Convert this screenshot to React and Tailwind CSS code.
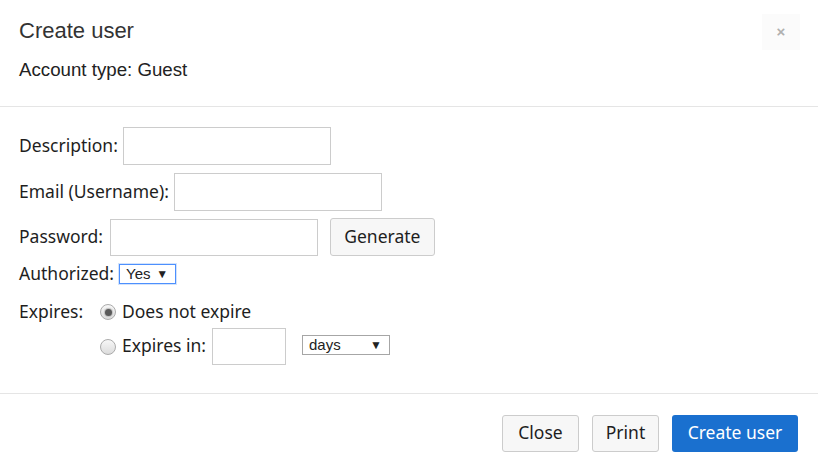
import React from 'react';

const sans = { fontFamily: '"Noto Sans", "Open Sans", sans-serif' };

function Radio({ checked }) {
  return (
    <span className="w-[16px] h-[16px] rounded-full border border-[#ababab] bg-gradient-to-b from-[#f7f7f7] to-[#dcdcdc] flex items-center justify-center shrink-0">
      {checked && <span className="w-[7px] h-[7px] rounded-full bg-[#5a5a5a] shadow-[0_0_1px_1px_#bdbdbd]" />}
    </span>
  );
}

function FakeSelect({ value, width, focused }) {
  return (
    <div
      className={`h-[20px] flex items-center justify-between pl-[6px] pr-[7px] bg-white font-['Liberation_Sans',Arial,sans-serif] text-[15px] text-[#222] ${
        focused ? 'border border-[#4d90fe] shadow-[0_0_0_1px_#d3e3fb]' : 'border border-[#a6a6a6]'
      }`}
      style={{ width }}
    >
      <span>{value}</span>
      <span className="text-[12px] leading-none">▼</span>
    </div>
  );
}

export default function App() {
  return (
    <div className="w-[818px] h-[471px] bg-white text-[#1e1e1e] overflow-hidden" style={sans}>
      {/* header */}
      <div className="h-[107px] border-b border-[#e5e5e5] flex justify-between">
        <div className="pl-[19px] font-['Liberation_Sans',Arial,sans-serif]">
          <div className="mt-[19px] h-[24px] leading-[24px] text-[22px] text-[#333]">Create user</div>
          <div className="mt-[15px] h-[24px] leading-[24px] text-[18.7px] text-[#222]">Account type: Guest</div>
        </div>
        <button className="mt-[14px] mr-[18px] w-[38px] h-[36px] bg-[#fbfbfb] flex items-center justify-center text-[#b0b0b0] text-[15px] font-bold font-['Liberation_Sans',Arial,sans-serif]">
          ×
        </button>
      </div>

      {/* body */}
      <div className="h-[287px] border-b border-[#e5e5e5] pl-[19px] pt-[20px] text-[17.5px]">
        <div className="flex items-center h-[38px]">
          <span className="pb-[2px]">Description:</span>
          <input className="ml-[5px] w-[208px] h-[38px] border border-[#cccccc] outline-none" />
        </div>
        <div className="flex items-center h-[38px] mt-[8px]">
          <span className="pb-[2px]">Email (Username):</span>
          <input className="ml-[5px] w-[208px] h-[38px] border border-[#cccccc] outline-none" />
        </div>
        <div className="flex items-center h-[38px] mt-[7px]">
          <span className="pb-[2px] mr-[2px]">Password:</span>
          <input className="ml-[5px] w-[208px] h-[37px] border border-[#cccccc] outline-none" />
          <button className="ml-[12px] w-[105px] h-[38px] pb-[2px] bg-[#f7f7f7] border border-[#cccccc] rounded-[3px]">Generate</button>
        </div>
        <div className="flex items-center h-[20px] mt-[8px]">
          <span className="pb-[2px]">Authorized:</span>
          <div className="ml-[5px]">
            <FakeSelect value="Yes" width={57} focused />
          </div>
        </div>
        <div className="flex mt-[17px]">
          <div className="w-[81px] h-[22px] leading-[20px]">Expires:</div>
          <div className="flex flex-col">
            <div className="flex items-center h-[22px]">
              <Radio checked />
              <span className="ml-[6px] pb-[2px]">Does not expire</span>
            </div>
            <div className="flex items-center h-[37px] mt-[5px]">
              <Radio />
              <span className="ml-[6px] pb-[2px]">Expires in:</span>
              <input className="ml-[6px] w-[74px] h-[37px] border border-[#cccccc] outline-none" />
              <div className="ml-[16px] mt-[-3px]">
                <FakeSelect value="days" width={88} />
              </div>
            </div>
          </div>
        </div>
      </div>

      {/* footer */}
      <div className="flex justify-end gap-[13px] pt-[21px] pr-[20px] text-[17.5px]">
        <button className="w-[77px] h-[37px] pb-[2px] bg-[#f7f7f7] border border-[#cccccc] rounded-[3px]">Close</button>
        <button className="w-[67px] h-[37px] pb-[2px] bg-[#f7f7f7] border border-[#cccccc] rounded-[3px]">Print</button>
        <button className="w-[126px] h-[37px] pb-[2px] bg-[#1a70cf] text-white rounded-[3px]">Create user</button>
      </div>
    </div>
  );
}
